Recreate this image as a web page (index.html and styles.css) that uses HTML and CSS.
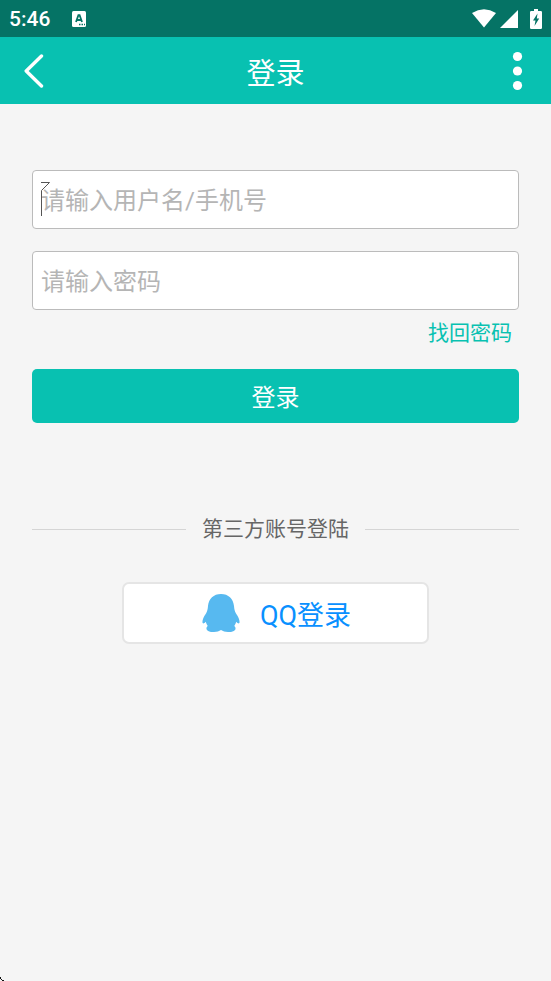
FILE: index.html
```html
<!DOCTYPE html>
<html lang="zh-CN">
<head>
<meta charset="utf-8">
<meta name="viewport" content="width=device-width, initial-scale=1">
<title>登录</title>
<link rel="stylesheet" href="styles.css">
</head>
<body>
<div class="status">
  <span class="time">5:46</span>
  <svg class="notice" width="14" height="16" viewBox="0 0 14 16" aria-hidden="true">
    <rect width="14" height="16" rx="1.5" fill="#fff"/>
    <path d="M4 11 6.4 4.2h1.2L10 11M4.8 9h4.4" fill="none" stroke="#057365" stroke-width="1.8"/>
    <path d="M7 13.5h1.5m1 0H11m1 0h1" stroke="#057365" stroke-width="1.3"/>
  </svg>
  <div class="signals" aria-hidden="true">
    <svg width="24" height="19" viewBox="0 0 24 19"><path d="M0 4Q12-3.4 24 4L12 18.6Z" fill="#fff"/></svg>
    <svg class="cell" width="18" height="18" viewBox="0 0 18 18"><path d="M18 0v18H0Z" fill="#fff"/></svg>
    <svg width="12" height="20" viewBox="0 0 12 20"><path d="M4 0h4v2h2.8Q12 2 12 3.2v15.6q0 1.2-1.2 1.2H1.2Q0 20 0 18.8V3.2Q0 2 1.2 2H4Z" fill="#fff"/><path d="M7.500 4.500 3 11.500h2.500L4.500 17 9.200 9.500H6.800Z" fill="#057365"/></svg>
  </div>
</div>
<header class="bar">
  <button class="icon-button" type="button" aria-label="返回">
    <svg width="20" height="34" viewBox="0 0 20 34"><path d="M17.5 2 2.2 17l15.3 15" fill="none" stroke="#fff" stroke-width="3.4" stroke-linecap="round" stroke-linejoin="round"/></svg>
  </button>
  <h1 class="title">登录</h1>
  <button class="icon-button" type="button" aria-label="更多">
    <svg width="20" height="40" viewBox="0 0 20 40"><g fill="#fff"><circle cx="10.500" cy="5.500" r="4.600"/><circle cx="10.500" cy="20" r="4.600"/><circle cx="10.500" cy="34.500" r="4.600"/></g></svg>
  </button>
</header>
<main class="content">
  <form class="form">
    <div class="field">
      <input class="input" type="text" aria-label="用户名/手机号" placeholder="请输入用户名/手机号">
      <svg class="caret" width="10" height="34" viewBox="0 0 10 34" aria-hidden="true"><path d="M.5 34V8.5L8.500.5H0" fill="none" stroke="#555" stroke-width="1"/></svg>
    </div>
    <div class="field">
      <input class="input" type="password" aria-label="密码" placeholder="请输入密码">
    </div>
    <a class="forgot" href="#">找回密码</a>
    <button class="submit" type="button">登录</button>
  </form>
  <div class="divider"><span>第三方账号登陆</span></div>
  <button class="qq" type="button">
    <svg width="38" height="38" viewBox="0 0 38 38" aria-hidden="true"><path d="M19 0C11.500 0 6.800 4.800 6 12c-.3 3.200-.6 5-2 7.500C1.800 22.500.4 25.500.4 28.300c.2 1.800 1.800 1.200 3.400-.5.5 1.800 1 3 2 4.200-1 .6-1.500 1.600-1.300 2.900C5 37 8 38 12 38c3 0 5-.7 7-1.900 2 1.200 4 1.900 7 1.900 4 0 7-1 7.500-3.100.2-1.300-.3-2.300-1.300-2.900 1-1.200 1.500-2.400 2-4.200 1.600 1.700 3.200 2.300 3.400.5 0-2.800-1.400-5.800-3.600-8.800-1.400-2.500-1.700-4.300-2-7.500C31.200 4.800 26.500 0 19 0Z" fill="#57b9f0"/></svg>
    <span>QQ登录</span>
  </button>
</main>
<svg class="pointer" width="4" height="4" viewBox="0 0 4 4" aria-hidden="true"><path d="M0 0h1v2H0zM1 2h1v1H1zM2 3h2v1H2z" fill="#111"/></svg>
</body>
</html>
```
FILE: styles.css
```css
* { box-sizing: border-box; }

body {
  margin: 0;
  min-height: 100vh;
  background: #f5f5f5;
  font-family: Roboto, "Noto Sans CJK SC", sans-serif;
}

button, input { font-family: inherit; }

svg { display: block; flex: none; }

.status {
  display: flex;
  align-items: center;
  height: 37px;
  padding: 0 9px;
  background: #057365;
  color: #fff;
}

.time { font-size: 21px; font-weight: 500; }

.notice { margin-left: 22px; }

.signals {
  display: flex;
  align-items: center;
  margin-left: auto;
}

.cell { margin: 0 12px 0 4px; }

.bar {
  display: flex;
  align-items: center;
  justify-content: space-between;
  height: 67px;
  padding: 0 24px;
  background: #08c1b1;
  color: #fff;
}

.icon-button {
  padding: 0;
  border: 0;
  background: none;
}

.title {
  margin: 0;
  font-size: 29px;
  font-weight: 400;
}

.content {
  display: flex;
  flex-direction: column;
  padding: 66px 32px 32px;
}

.form { display: flex; flex-direction: column; }

.field { position: relative; margin-bottom: 22px; }

.field + .field { margin-bottom: 7px; }

.input {
  display: block;
  width: 100%;
  height: 59px;
  padding: 2px 8px 0;
  border: 1px solid #bbb;
  border-radius: 4px;
  background: #fff;
  font-size: 24px;
}

.input::placeholder { color: #b5b5b5; opacity: 1; }

.caret { position: absolute; left: 9px; top: 12px; }

.forgot {
  align-self: flex-end;
  margin: 0 7px 20px 0;
  color: #08c1b1;
  font-size: 21px;
  line-height: 32px;
  text-decoration: none;
}

.submit {
  height: 54px;
  padding: 0 0 2px;
  border: 0;
  border-radius: 5px;
  background: #08c1b1;
  color: #fff;
  font-size: 24px;
}

.divider {
  display: flex;
  align-items: center;
  gap: 16px;
  margin: 90px 0 37px;
  color: #666;
  font-size: 21px;
  line-height: 32px;
}

.divider::before, .divider::after {
  content: "";
  flex: 1;
  height: 1px;
  background: #d5d5d5;
}

.qq {
  display: flex;
  align-items: center;
  align-self: center;
  justify-content: center;
  gap: 20px;
  width: 63%;
  height: 62px;
  padding: 0 0 0 2px;
  border: 2px solid #e5e5e5;
  border-radius: 7px;
  background: #fff;
  color: #0990ff;
  font-size: 27px;
}

.pointer { position: fixed; left: 0; bottom: 0; }
```
